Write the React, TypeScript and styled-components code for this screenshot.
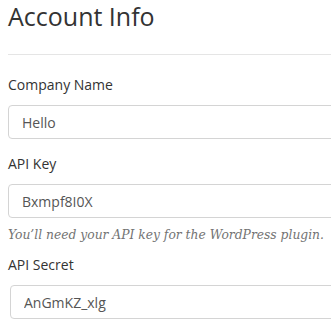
import React from 'react';
import styled, { createGlobalStyle } from 'styled-components';

const GlobalStyle = createGlobalStyle`
  html, body {
    margin: 0;
    padding: 0;
    background: #fff;
    overflow: hidden;
  }
  body {
    font-family: 'Open Sans', 'Noto Sans', sans-serif;
    color: #333;
  }
`;

const StyledAccountSection = styled.section`
  width: 340px;
  padding: 1px 0 0 8px;
`;

const StyledTitle = styled.h2`
  margin: 0;
  font-size: 25px;
  line-height: 30px;
  font-weight: 400;
  color: #333;
`;

const StyledRule = styled.hr`
  margin: 23px 0 20px;
  border: 0;
  border-top: 1px solid #e5e5e5;
`;

const StyledFormGroup = styled.div`
  margin-bottom: 15px;
`;

const StyledLabel = styled.label`
  display: block;
  font-size: 14px;
  line-height: 20px;
  font-weight: 400;
  color: #333;
  margin-bottom: 10px;
`;

const StyledInput = styled.input<{ $indent?: number }>`
  display: block;
  box-sizing: border-box;
  width: calc(100% - ${(p) => p.$indent ?? 0}px);
  margin-left: ${(p) => p.$indent ?? 0}px;
  height: 34px;
  padding: 6px 13px;
  font-family: 'Open Sans', 'Noto Sans', sans-serif;
  font-size: 14px;
  color: #555;
  background: #fff;
  border: 1px solid #d4d4d4;
  border-radius: 4px;
  outline: none;
`;

const StyledHelp = styled.p`
  margin: 8px 0 -4px;
  font-family: 'DejaVu Serif', 'Liberation Serif', serif;
  font-style: italic;
  font-size: 12.3px;
  line-height: 18px;
  color: #737373;
  white-space: nowrap;
`;

const fields = [
  { label: 'Company Name', value: 'Hello' },
  {
    label: 'API Key',
    value: 'Bxmpf8I0X',
    help: 'You\u2019ll need your API key for the WordPress plugin.',
  },
  { label: 'API Secret', value: 'AnGmKZ_xlg', indent: 2 },
];

const App = () => {
  return (
    <>
      <GlobalStyle />
      <StyledAccountSection>
        <StyledTitle>Account Info</StyledTitle>
        <StyledRule />
        {fields.map((field, i) => (
          <StyledFormGroup key={`field-${i}`}>
            <StyledLabel>{field.label}</StyledLabel>
            <StyledInput $indent={field.indent} defaultValue={field.value} readOnly />
            {field.help && <StyledHelp>{field.help}</StyledHelp>}
          </StyledFormGroup>
        ))}
      </StyledAccountSection>
    </>
  );
};

export default App;
